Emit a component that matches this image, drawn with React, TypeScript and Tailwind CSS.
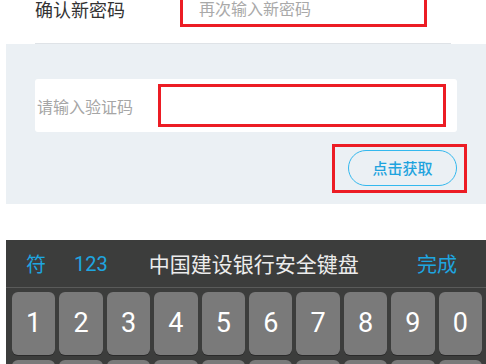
import React from "react";

const cjk = { fontFamily: '"Noto Sans CJK SC", "Noto Sans", sans-serif' };
const roboto = { fontFamily: 'Roboto, "Noto Sans", sans-serif' };

export default function App() {
  const digits = ["1", "2", "3", "4", "5", "6", "7", "8", "9", "0"];
  return (
    <div className="w-[486px] h-[364px] overflow-hidden bg-white" style={cjk}>
      {/* top row (scrolled partially out of view) */}
      <div className="-mt-[17px]">
        <div className="mx-[35px] h-[61px] flex border-b border-[#dfe3e7]">
          <div className="w-[145px] flex items-center pb-[8px] text-[18px] text-[#333333]">
            确认新密码
          </div>
          <div className="w-[247px] h-[44px] border-[3px] border-[#ec1c24] flex items-end pb-[8px] pl-[16px] text-[16px] leading-none text-[#a9a9a9]">
            再次输入新密码
          </div>
        </div>
      </div>

      {/* gray section */}
      <div className="ml-[6px] h-[160px] bg-[#ebf0f4] pt-[35px] flex flex-col">
        <div className="mx-[29px] h-[53px] bg-white rounded-[3px] flex items-center pl-[2px] pr-[11px]">
          <div className="w-[121px] text-[16px] text-[#a6a6a6] leading-none">请输入验证码</div>
          <div className="flex-1 h-[43px] border-[3px] border-[#ec1c24]" />
        </div>
        <div className="flex justify-end pr-[19px] mt-[12px]">
          <div className="w-[135px] h-[49px] border-[3px] border-[#ec1c24] pt-[3px] pl-[13px]">
            <div className="w-[109px] h-[36px] rounded-full border-[1.5px] border-[#33b8ee] flex items-center justify-center text-[15px] font-medium text-[#1ea3de]">
              点击获取
            </div>
          </div>
        </div>
      </div>

      <div className="h-[36px]" />

      {/* keyboard */}
      <div className="ml-[6px] bg-[#3c3d3c]">
        <div className="h-[48px] flex items-center border-b border-[#5a5b5a] pl-[20px] pr-[29px] text-[20px]">
          <span className="text-[#1ea6e0]">符</span>
          <span className="ml-[28px] text-[#1ea6e0]" style={roboto}>123</span>
          <span className="ml-[41px] text-[21px] text-[#ececec]">中国建设银行安全键盘</span>
          <span className="ml-auto text-[#1ea6e0]">完成</span>
        </div>
        <div className="pt-[4px] pl-[6px] pr-[4px] flex flex-col gap-[5px]">
          <div className="flex gap-[4px]">
            {digits.map((d) => (
              <div
                key={d}
                className="flex-1 h-[63px] rounded-[6px] bg-[#7a7a7a] shadow-[0_1px_0_#2a2a2a] flex items-center justify-center text-white text-[27px]"
                style={roboto}
              >
                {d}
              </div>
            ))}
          </div>
          <div className="flex gap-[4px]">
            {digits.map((d) => (
              <div key={"r2" + d} className="flex-1 h-[63px] rounded-[6px] bg-[#7a7a7a]" />
            ))}
          </div>
        </div>
      </div>
    </div>
  );
}
